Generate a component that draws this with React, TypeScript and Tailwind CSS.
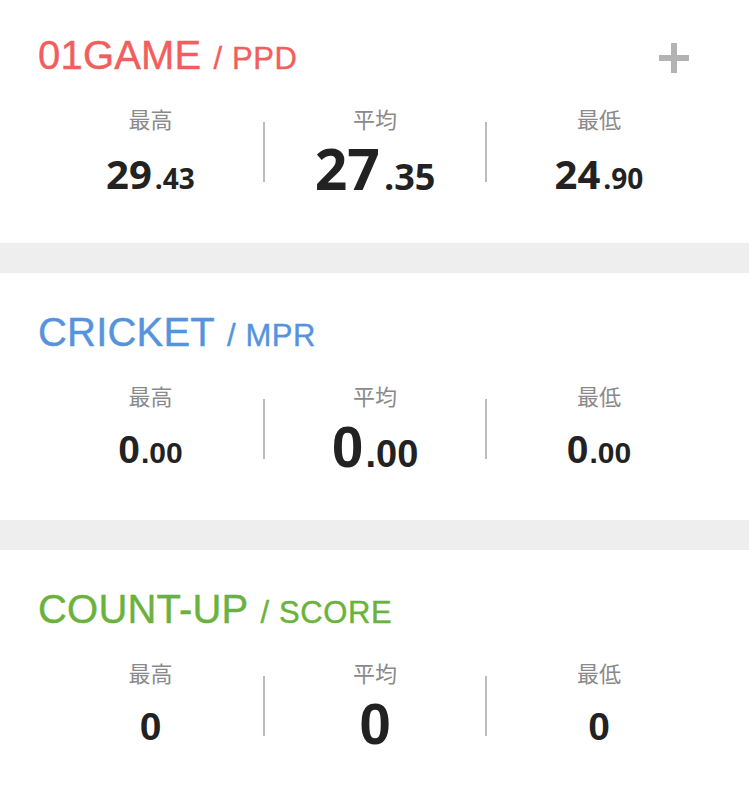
import React from 'react';

type Stat = { label: string; int: string; dec?: string };

interface SectionProps {
    title: string;
    unit: string;
    color: string;
    stats: Stat[];
    numFont: 'open' | 'lib';
    showPlus?: boolean;
    first?: boolean;
}

const PlusIcon = () => (
    <svg width="30" height="30" viewBox="0 0 30 30" className="mt-[7px] mr-[60px] shrink-0">
        <rect x="0" y="12" width="30" height="6" fill="#b3b3b3" />
        <rect x="12" y="0" width="6" height="30" fill="#b3b3b3" />
    </svg>
);

const Divider = () => <div className="w-[2px] h-[60px] mt-[15px] bg-[#bcbcbc] shrink-0" />;

const StatCol = ({ stat, big, numFont, width }: { stat: Stat; big: boolean; numFont: 'open' | 'lib'; width: string }) => {
    const open = numFont === 'open';
    const intCls = open
        ? big ? 'text-[57px] mt-[11px]' : 'text-[40px] mt-[25px]'
        : big ? 'text-[57px] mt-[13px]' : 'text-[39px] mt-[24px]';
    const decCls = open ? (big ? 'text-[36px] ml-[4px]' : 'text-[28px] ml-[3px]') : big ? 'text-[38px] ml-[2px]' : 'text-[30px] ml-[1px]';
    const family = open ? "font-['Open_Sans',sans-serif]" : "font-['Liberation_Sans',Arial,sans-serif]";

    return (
        <div className={`${width} flex flex-col items-center shrink-0`}>
            <div className="text-[22px] leading-[22px] text-[#8a8a8a] font-['Noto_Sans_CJK_JP',sans-serif]">{stat.label}</div>
            <div className={`flex items-baseline font-bold text-[#222222] leading-none ${family}`}>
                <span className={`${intCls} leading-none`}>{stat.int}</span>
                {stat.dec && <span className={`${decCls} leading-none`}>{stat.dec}</span>}
            </div>
        </div>
    );
};

const Section = ({ title, unit, color, stats, numFont, showPlus, first }: SectionProps) => (
    <section className={`h-[247px] bg-white pl-[38px] pt-[40px] ${first ? '-mt-[4px]' : ''}`}>
        <div className="flex justify-between items-start">
            <h2
                className="text-[40px] leading-[39px] tracking-[0.2px] font-['Liberation_Sans',Arial,sans-serif] whitespace-nowrap [-webkit-text-stroke:0.4px_currentColor]"
                style={{ color }}
            >
                {title}
                <span className="text-[31px] tracking-[0.6px] ml-[12px]">/ {unit}</span>
            </h2>
            {showPlus && <PlusIcon />}
        </div>
        <div className="flex mt-[29px]">
            <StatCol stat={stats[0]} big={false} numFont={numFont} width="w-[225px]" />
            <Divider />
            <StatCol stat={stats[1]} big numFont={numFont} width="w-[220px]" />
            <Divider />
            <StatCol stat={stats[2]} big={false} numFont={numFont} width="w-[224px]" />
        </div>
    </section>
);

const Band = () => <div className="h-[30px] bg-[#eeeeee]" />;

export default function App() {
    return (
        <div className="w-[749px] h-[795px] overflow-hidden bg-white">
            <Section
                first
                showPlus
                title="01GAME"
                unit="PPD"
                color="#f25d5d"
                numFont="open"
                stats={[
                    { label: '最高', int: '29', dec: '.43' },
                    { label: '平均', int: '27', dec: '.35' },
                    { label: '最低', int: '24', dec: '.90' },
                ]}
            />
            <Band />
            <Section
                title="CRICKET"
                unit="MPR"
                color="#5594dc"
                numFont="lib"
                stats={[
                    { label: '最高', int: '0', dec: '.00' },
                    { label: '平均', int: '0', dec: '.00' },
                    { label: '最低', int: '0', dec: '.00' },
                ]}
            />
            <Band />
            <Section
                title="COUNT-UP"
                unit="SCORE"
                color="#6ab23c"
                numFont="lib"
                stats={[
                    { label: '最高', int: '0' },
                    { label: '平均', int: '0' },
                    { label: '最低', int: '0' },
                ]}
            />
        </div>
    );
}
